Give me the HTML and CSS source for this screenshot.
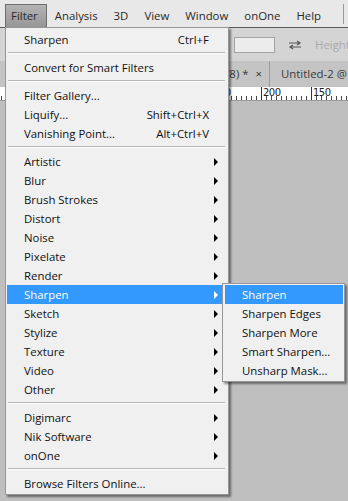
FILE: index.html
```html
<!DOCTYPE html>
<html>
<head>
<meta charset="utf-8">
<link rel="stylesheet" href="styles.css">
</head>
<body>
<div class="app">
  <div class="menubar">
    <span class="mb-item active">Filter</span>
    <span class="mb-item">Analysis</span>
    <span class="mb-item">3D</span>
    <span class="mb-item">View</span>
    <span class="mb-item">Window</span>
    <span class="mb-item">onOne</span>
    <span class="mb-item">Help</span>
    <span class="mb-sep"></span>
  </div>
  <div class="options">
    <span class="opt-input"></span>
    <svg class="swap" width="14" height="10" viewBox="0 0 14 10">
      <path d="M1 3H11M9 1L12 3L9 5" fill="none" stroke="#555" stroke-width="1.2"/>
      <path d="M13 7H3M5 5L2 7L5 9" fill="none" stroke="#555" stroke-width="1.2"/>
    </svg>
    <span class="opt-label">Height:</span>
  </div>
  <div class="tabs">
    <div class="tab first"><span class="tab-text">Untitled-1 @ 66.7% (RGB/8) *</span><span class="x">×</span></div>
    <div class="tab second">Untitled-2 @ 100% (RGB/8)</div>
  </div>
  <div class="ruler">
    <span class="mark">450</span><span class="mark">400</span><span class="mark">350</span><span class="mark">300</span><span class="mark">250</span><span class="mark">200</span><span class="mark">150</span><span class="mark">100</span>
  </div>
  <div class="canvas"></div>
</div>

<div class="menu">
  <div class="row"><span class="label">Sharpen</span><span class="short">Ctrl+F</span></div>
  <div class="sep"></div>
  <div class="row"><span class="label">Convert for Smart Filters</span></div>
  <div class="sep"></div>
  <div class="row"><span class="label">Filter Gallery...</span></div>
  <div class="row"><span class="label">Liquify...</span><span class="short">Shift+Ctrl+X</span></div>
  <div class="row"><span class="label">Vanishing Point...</span><span class="short">Alt+Ctrl+V</span></div>
  <div class="sep"></div>
  <div class="row"><span class="label">Artistic</span><span class="arrow"></span></div>
  <div class="row"><span class="label">Blur</span><span class="arrow"></span></div>
  <div class="row"><span class="label">Brush Strokes</span><span class="arrow"></span></div>
  <div class="row"><span class="label">Distort</span><span class="arrow"></span></div>
  <div class="row"><span class="label">Noise</span><span class="arrow"></span></div>
  <div class="row"><span class="label">Pixelate</span><span class="arrow"></span></div>
  <div class="row"><span class="label">Render</span><span class="arrow"></span></div>
  <div class="row hl"><span class="label">Sharpen</span><span class="arrow"></span></div>
  <div class="row"><span class="label">Sketch</span><span class="arrow"></span></div>
  <div class="row"><span class="label">Stylize</span><span class="arrow"></span></div>
  <div class="row"><span class="label">Texture</span><span class="arrow"></span></div>
  <div class="row"><span class="label">Video</span><span class="arrow"></span></div>
  <div class="row"><span class="label">Other</span><span class="arrow"></span></div>
  <div class="sep"></div>
  <div class="row"><span class="label">Digimarc</span><span class="arrow"></span></div>
  <div class="row"><span class="label">Nik Software</span><span class="arrow"></span></div>
  <div class="row"><span class="label">onOne</span><span class="arrow"></span></div>
  <div class="sep"></div>
  <div class="row"><span class="label">Browse Filters Online...</span></div>
</div>

<div class="submenu">
  <div class="row hl"><span class="label">Sharpen</span></div>
  <div class="row"><span class="label">Sharpen Edges</span></div>
  <div class="row"><span class="label">Sharpen More</span></div>
  <div class="row"><span class="label">Smart Sharpen...</span></div>
  <div class="row"><span class="label">Unsharp Mask...</span></div>
</div>
</body>
</html>
```

FILE: styles.css
```css
* { box-sizing: border-box; }
html, body { margin: 0; padding: 0; }
body {
  width: 348px;
  height: 501px;
  overflow: hidden;
  font-family: "Open Sans", "Noto Sans", "Liberation Sans", sans-serif;
  font-size: 11.4px;
  color: #111;
  position: relative;
  background: #bfbfbf;
}
.app {
  display: flex;
  flex-direction: column;
  height: 501px;
}
.menubar {
  height: 28px;
  background: #e8e8e8;
  border-bottom: 1px solid #5a5a5a;
  display: flex;
  align-items: flex-end;
  padding-left: 5px;
  white-space: nowrap;
}
.mb-item {
  height: 23px;
  line-height: 21px;
  padding: 0 8px 0 5px;
  margin-right: 1px;
  color: #2a2a2a;
  border: 1px solid transparent;
  border-bottom: none;
}
.mb-item.active {
  background: linear-gradient(#b4b4b4, #969696);
  border-color: #6e6e6e;
  margin-right: 2px;
}
.mb-sep {
  width: 1px;
  height: 20px;
  margin: 0 0 3px 12px;
  background: #9a9a9a;
}
.options {
  height: 33px;
  background: #d4d4d4;
  display: flex;
  align-items: center;
  white-space: nowrap;
}
.opt-input {
  flex: 0 0 41px;
  height: 16px;
  margin-left: 234px;
  background: #ececec;
  border: 1px solid #a4a4a4;
}
.swap {
  flex: 0 0 14px;
  margin-left: 13px;
}
.opt-label {
  margin-left: 13px;
  color: #ababab;
}
.tabs {
  height: 26px;
  background: #c4c4c4;
  display: flex;
  align-items: center;
  white-space: nowrap;
  overflow: hidden;
  color: #3a3a3a;
}
.tab {
  height: 26px;
  line-height: 26px;
}
.tab.first {
  flex: 0 0 270px;
  display: flex;
  justify-content: flex-end;
  padding-right: 7px;
  border-right: 1px solid #9c9c9c;
  overflow: hidden;
}
.tab.first .tab-text { flex: 0 0 auto; }
.tab.first .x { margin-left: 7px; }
.tab.second { padding-left: 11px; }
.ruler {
  height: 14px;
  background: linear-gradient(to right, #444 1px, transparent 1px) 1px 100% / 5px 4px repeat-x, #fff;
  display: flex;
  padding-left: 11px;
  border-bottom: 1px solid #9a9a9a;
  overflow: hidden;
}
.mark {
  flex: 0 0 50px;
  border-left: 1px solid #333;
  font-size: 10px;
  line-height: 11px;
  padding-left: 1px;
  font-family: "DejaVu Sans", sans-serif;
  letter-spacing: -0.5px;
  color: #222;
}
.canvas {
  flex: 1;
  background: #bfbfbf;
}

/* dropdown */
.menu {
  position: absolute;
  left: 5px;
  top: 27px;
  width: 224px;
  background: #f0f0f0;
  border: 1px solid #979797;
  padding: 2px 0 1px;
  box-shadow: 2px 2px 2px rgba(0, 0, 0, 0.45);
}
.row {
  height: 19px;
  display: flex;
  align-items: center;
  padding: 0 9px 0 17px;
  margin: 0 1px;
  white-space: nowrap;
}
.row .label { flex: 1; }
.row .short { margin-right: 9px; }
.row.hl {
  background: #3399ff;
  color: #fff;
}
.arrow {
  width: 0;
  height: 0;
  border-left: 4px solid #000;
  border-top: 4px solid transparent;
  border-bottom: 4px solid transparent;
}
.row.hl .arrow { border-left-color: #fff; }
.sep {
  height: 9px;
  padding-top: 3px;
  margin: 0 3px 0 2px;
}
.sep::before {
  content: "";
  display: block;
  height: 1px;
  background: #b5b5b5;
  border-bottom: 1px solid #fff;
  box-sizing: content-box;
}

.submenu {
  position: absolute;
  left: 222px;
  top: 283px;
  width: 123px;
  background: #f0f0f0;
  border: 1px solid #979797;
  padding: 1px 0;
  box-shadow: 2px 2px 2px rgba(0, 0, 0, 0.45);
}
.submenu .row {
  padding-left: 17px;
  margin: 0 1px 0 2px;
}
```
